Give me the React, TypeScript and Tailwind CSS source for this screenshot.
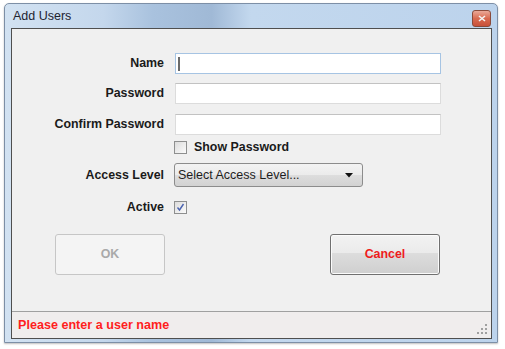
import React from "react";

function Checkbox({ checked }: { checked?: boolean }) {
  return (
    <div className="w-[13px] h-[13px] border border-[#8e8f8f] bg-gradient-to-br from-[#dcdcdc] to-[#fbfbfb] flex items-center justify-center">
      {checked && (
        <svg width="9" height="9" viewBox="0 0 9 9">
          <path d="M1.5 4.5 L3.5 7 L7.5 1" stroke="#4a63b0" strokeWidth="1.4" fill="none" />
        </svg>
      )}
    </div>
  );
}

function Label({ children }: { children: React.ReactNode }) {
  return (
    <div className="w-[152px] text-right text-[12.4px] font-bold text-[#1a1a1a] leading-none">{children}</div>
  );
}

export default function App() {
  return (
    <div
      className="w-[505px] h-[349px] bg-white relative overflow-hidden"
      style={{ fontFamily: '"Liberation Sans", Arial, sans-serif' }}
    >
      <div className="absolute left-[4px] top-[3px] w-[494px] h-[340px] border border-[#7d8fa6] rounded-t-[5px] bg-[linear-gradient(90deg,#d2e2f2_0%,#c4d7ec_20%,#a9c2de_30%,#a0b9d6_42%,#c3d8ee_50%,#bcd3ec_100%)] flex flex-col shadow-[0_1px_2px_rgba(0,0,0,0.25)]">
        {/* title bar */}
        <div className="h-[24px] flex items-center pl-[8px] pr-[6px] shrink-0">
          <span className="text-[12.5px] text-[#1e2430] mt-[1px]">Add Users</span>
          <div className="ml-auto mt-[4px] w-[19px] h-[17px] rounded-[3px] border border-[#8a4a3a] bg-gradient-to-b from-[#e9a898] via-[#d86a50] to-[#c8503a] flex items-center justify-center">
            <svg width="8" height="7" viewBox="0 0 8 7">
              <path d="M1 1 L7 6 M7 1 L1 6" stroke="#f4f4f4" strokeWidth="1.6" />
            </svg>
          </div>
        </div>
        {/* client */}
        <div className="ml-[6px] mr-[5px] mb-[3px] flex-1 border border-[#4f4f4f] bg-[#f0f0f0] flex flex-col">
          <div className="flex-1 flex flex-col">
            {/* Name */}
            <div className="flex items-center h-[21px] mt-[24px]">
              <Label>Name</Label>
              <div className="ml-[11px] w-[266px] h-[21px] border border-[#a6c4e3] bg-white flex items-center pl-[2px]">
                <div className="w-[2px] h-[14px] bg-[#6a6a6a]" />
              </div>
            </div>
            {/* Password */}
            <div className="flex items-center h-[21px] mt-[9px]">
              <Label>Password</Label>
              <div className="ml-[11px] w-[266px] h-[21px] border border-[#dcdcdc] border-t-[#c2c2c2] bg-white" />
            </div>
            {/* Confirm */}
            <div className="flex items-center h-[21px] mt-[10px]">
              <Label>Confirm Password</Label>
              <div className="ml-[11px] w-[266px] h-[21px] border border-[#dcdcdc] border-t-[#c2c2c2] bg-white" />
            </div>
            {/* Show password */}
            <div className="flex items-center h-[13px] mt-[6px]">
              <div className="w-[152px]" />
              <div className="ml-[10px]">
                <Checkbox />
              </div>
              <span className="ml-[7px] text-[12.4px] font-bold text-[#1a1a1a] leading-none">Show Password</span>
            </div>
            {/* Access level */}
            <div className="flex items-center h-[24px] mt-[9px]">
              <Label>Access Level</Label>
              <div className="ml-[10px] w-[189px] h-[24px] rounded-[3px] border border-[#8c8c8c] bg-[linear-gradient(180deg,#f3f3f3_0%,#ebebeb_50%,#dddddd_51%,#d2d2d2_100%)] flex items-center pl-[3px] pr-[9px]">
                <span className="text-[12.5px] text-[#1e1e1e] leading-none">Select Access Level...</span>
                <svg className="ml-auto" width="8" height="5" viewBox="0 0 8 5">
                  <path d="M0 0 H8 L4 4.5 Z" fill="#111111" />
                </svg>
              </div>
            </div>
            {/* Active */}
            <div className="flex items-center h-[14px] mt-[13px]">
              <Label>Active</Label>
              <div className="ml-[10px]">
                <Checkbox checked />
              </div>
            </div>
            {/* Buttons */}
            <div className="flex h-[41px] mt-[20px]">
              <div className="ml-[43px] w-[110px] h-[41px] rounded-[3px] border border-[#c6c6c6] bg-[#f4f4f4] flex items-center justify-center text-[12.4px] font-bold text-[#a9a9a9]">
                OK
              </div>
              <div className="ml-[165px] w-[110px] h-[41px] rounded-[3px] border border-[#707070] bg-[linear-gradient(180deg,#f2f2f2_0%,#ebebeb_45%,#dddddd_46%,#cfcfcf_100%)] shadow-[inset_0_0_0_1px_#fbfbfb] flex items-center justify-center text-[12.4px] font-bold text-[#ee1c1c]">
                Cancel
              </div>
            </div>
          </div>
          {/* status bar */}
          <div className="h-[27px] border-t border-[#a0a0a0] bg-[#f0eded] flex items-center pl-[6px] relative shrink-0">
            <span className="text-[12.6px] font-bold text-[#ff1e1e] leading-none mt-[1px]">Please enter a user name</span>
            <svg className="absolute right-[3px] bottom-[3px]" width="12" height="12" viewBox="0 0 12 12">
              <rect x="9" y="1" width="2" height="2" fill="#a0a0a0" />
              <rect x="5" y="5" width="2" height="2" fill="#a0a0a0" />
              <rect x="9" y="5" width="2" height="2" fill="#a0a0a0" />
              <rect x="1" y="9" width="2" height="2" fill="#a0a0a0" />
              <rect x="5" y="9" width="2" height="2" fill="#a0a0a0" />
              <rect x="9" y="9" width="2" height="2" fill="#a0a0a0" />
            </svg>
          </div>
        </div>
      </div>
    </div>
  );
}
